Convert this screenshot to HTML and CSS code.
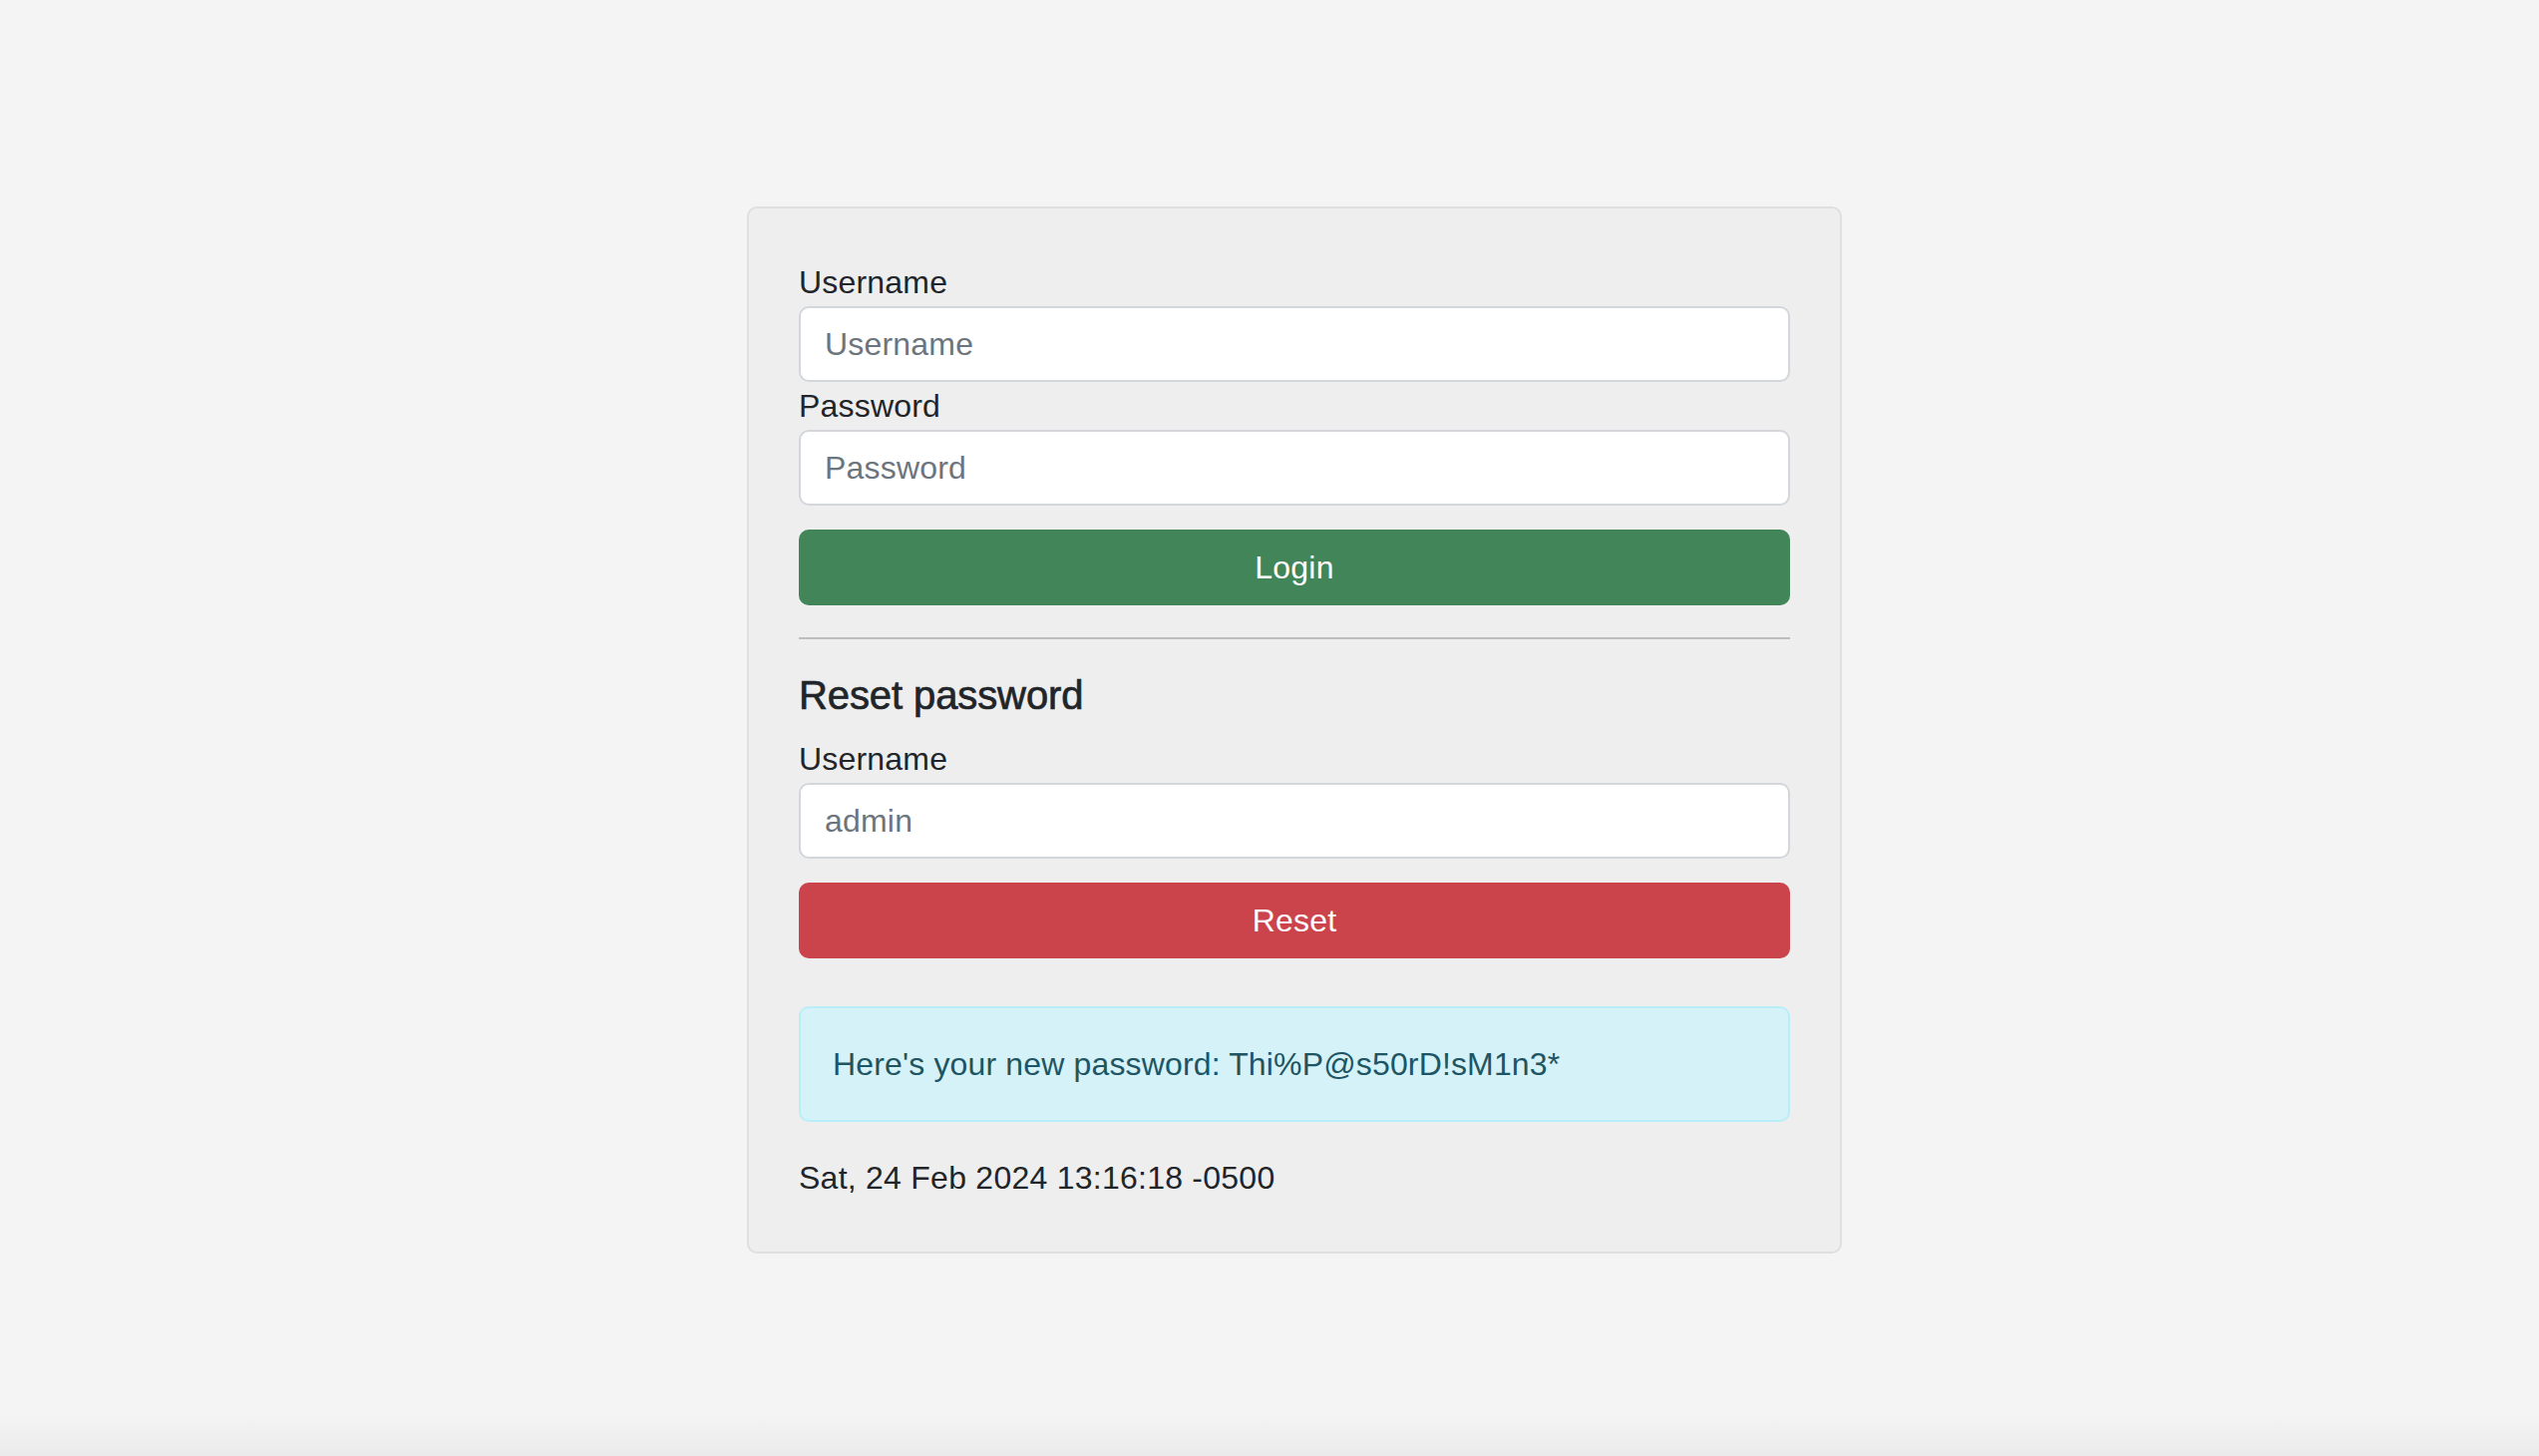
FILE: index.html
```html
<!DOCTYPE html>
<html lang="en">
<head>
<meta charset="utf-8">
<title>Login</title>
<link rel="stylesheet" href="styles.css">
</head>
<body>
<div class="page">
  <div class="card">
    <form class="login">
      <label class="label" for="u">Username</label>
      <input class="input" id="u" type="text" placeholder="Username">
      <label class="label" for="p">Password</label>
      <input class="input" id="p" type="password" placeholder="Password">
      <button type="button" class="btn btn-login">Login</button>
    </form>
    <hr class="divider">
    <h5 class="heading">Reset password</h5>
    <form class="reset">
      <label class="label" for="r">Username</label>
      <input class="input" id="r" type="text" placeholder="admin">
      <button type="button" class="btn btn-reset">Reset</button>
    </form>
    <div class="alert">Here's your new password: Thi%P@s50rD!sM1n3*</div>
    <p class="date">Sat, 24 Feb 2024 13:16:18 -0500</p>
  </div>
</div>
</body>
</html>
```
FILE: styles.css
```css
html, body {
  margin: 0;
  padding: 0;
}
body {
  min-height: 100vh;
  background: linear-gradient(to bottom, #f4f4f4 0, #f4f4f4 calc(100% - 44px), #ebebeb 100%);
  font-family: "Liberation Sans", Arial, sans-serif;
  color: #212529;
  font-size: 32px;
  line-height: 48px;
}
.page {
  display: flex;
  justify-content: center;
  padding: 207px 0 0 50px;
}
.card {
  box-sizing: border-box;
  width: 1098px;
  background: #eeeeee;
  border: 2px solid #dfdfdf;
  border-radius: 10px;
  padding: 50px;
}
.login, .reset {
  display: flex;
  flex-direction: column;
  margin: 0;
}
.label {
  display: block;
  font-size: 32px;
  line-height: 48px;
  letter-spacing: 0.2px;
}
.input {
  box-sizing: border-box;
  width: 100%;
  height: 76px;
  padding: 12px 24px;
  border: 2px solid #d3d6da;
  border-radius: 10px;
  background: #ffffff;
  font-family: inherit;
  font-size: 32px;
  line-height: 48px;
  color: #212529;
  letter-spacing: 0.2px;
  outline: none;
}
.input::placeholder {
  color: #6c757d;
  opacity: 1;
}
.btn {
  box-sizing: border-box;
  width: 100%;
  height: 76px;
  margin-top: 24px;
  padding: 12px 24px;
  border: none;
  border-radius: 10px;
  color: #ffffff;
  font-family: inherit;
  font-size: 32px;
  line-height: 48px;
  letter-spacing: 0.2px;
  cursor: pointer;
}
.btn-login {
  background: #418558;
}
.btn-reset {
  background: #cb444b;
}
.divider {
  margin: 32px 0;
  border: 0;
  border-top: 2px solid #bdbdbd;
  height: 0;
}
.heading {
  margin: 0 0 16px;
  font-size: 40px;
  line-height: 48px;
  font-weight: 400;
  -webkit-text-stroke: 0.7px #212529;
  letter-spacing: -0.1px;
}
.alert {
  margin: 48px 0 32px;
  padding: 32px 32px;
  border: 2px solid #b9eef9;
  border-radius: 10px;
  background: #d5f2f9;
  color: #1d5563;
  letter-spacing: 0.15px;
}
.date {
  margin: 0;
  letter-spacing: 0.25px;
}
```
